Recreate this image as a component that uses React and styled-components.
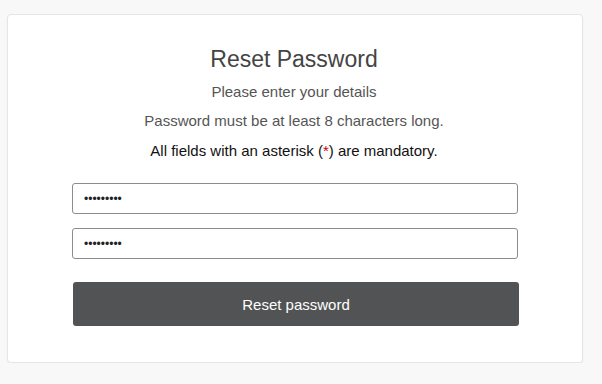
import React from "react";
import { useState } from "react";
import styled, { createGlobalStyle } from "styled-components";

const GlobalStyle = createGlobalStyle`
  html, body {
    margin: 0;
    padding: 0;
    background-color: #f8f8f8;
    font-family: "Liberation Sans", Arial, sans-serif;
  }
`;

const Page = styled.div`
  padding: 14px 0 0 7px;
`;

const Card = styled.div`
  box-sizing: border-box;
  width: 576px;
  height: 349px;
  padding: 31px 66px 0 64px;
  background-color: #ffffff;
  border: 1px solid #e6e6e6;
  border-radius: 4px;
  box-shadow: 0 1px 2px rgba(0, 0, 0, 0.06);
  display: flex;
  flex-direction: column;
  align-items: stretch;
`;

const Intro = styled.div`
  display: flex;
  flex-direction: column;
  gap: 9px;
`;

const Title = styled.h1`
  margin: 0 0 0.5px;
  font-size: 23px;
  line-height: 26px;
  font-weight: normal;
  color: #444444;
  text-align: center;
`;

const Info = styled.p`
  margin: 0;
  font-size: 15px;
  line-height: 20.5px;
  color: ${(p) => (p.$strong ? "#111111" : "#555555")};
  text-align: center;
`;

const Star = styled.span`
  color: #d40000;
`;

const Form = styled.form`
  display: flex;
  flex-direction: column;
  gap: 14px;
  margin-top: 22px;
`;

const Input = styled.input`
  box-sizing: border-box;
  width: 446px;
  height: 31px;
  padding: 0 11px;
  border: 1px solid #8c8c8c;
  border-radius: 3px;
  font-family: "Liberation Sans", Arial, sans-serif;
  font-size: 12px;
  color: #222222;
  background: #ffffff;
  outline: none;
`;

const Button = styled.button`
  width: 446px;
  height: 44px;
  margin-top: 9px;
  margin-left: 1px;
  border: none;
  border-radius: 3px;
  background-color: #525354;
  color: #ffffff;
  font-family: "Liberation Sans", Arial, sans-serif;
  font-size: 15px;
  cursor: pointer;
`;

export default function App() {
  const [password, setPassword] = useState("123456789");
  const [confirm, setConfirm] = useState("123456789");

  return (
    <Page>
      <GlobalStyle />
      <Card>
        <Intro>
          <Title>Reset Password</Title>
          <Info>Please enter your details</Info>
          <Info>Password must be at least 8 characters long.</Info>
          <Info $strong>
            All fields with an asterisk (<Star>*</Star>) are mandatory.
          </Info>
        </Intro>
        <Form onSubmit={(e) => e.preventDefault()}>
          <Input
            type="password"
            name="password"
            value={password}
            onChange={(e) => setPassword(e.target.value)}
          />
          <Input
            type="password"
            name="confirmPassword"
            value={confirm}
            onChange={(e) => setConfirm(e.target.value)}
          />
          <Button type="submit">Reset password</Button>
        </Form>
      </Card>
    </Page>
  );
}
